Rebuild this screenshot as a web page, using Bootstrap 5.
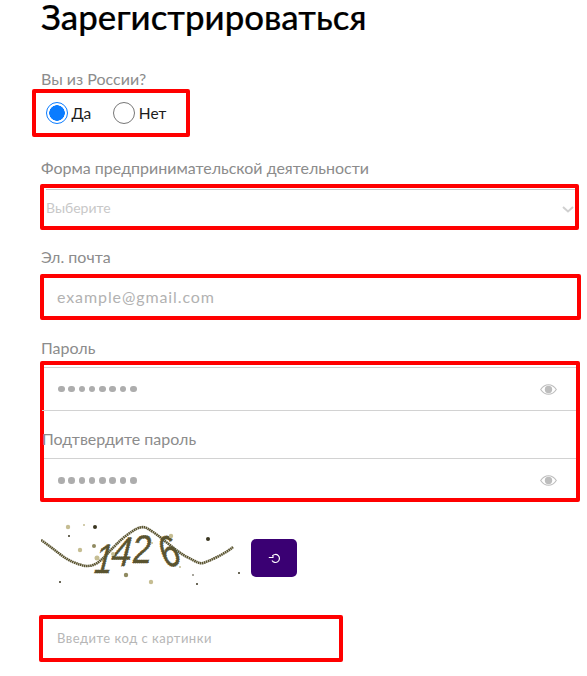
<!doctype html>
<html lang="ru">
<head>
<meta charset="utf-8">
<title>Зарегистрироваться</title>
<link href="https://cdn.jsdelivr.net/npm/bootstrap@5.3.0/dist/css/bootstrap.min.css" rel="stylesheet">
<style>
body{font-family:"Lato","Noto Sans",sans-serif;background:#fff;color:#000;overflow:hidden;}
.page{padding:1.5px 6px 0 41px;width:587px;height:676px;overflow:hidden;}
.reg-title{font-size:34.800px;line-height:30px;font-weight:500;margin:0 0 37.5px;color:#000;-webkit-text-stroke:.2px #000;}
.fld-label{display:block;font-size:16px;line-height:20px;color:#8c8c8c;margin:0;}
.red-box{border:4px solid #f00;border-radius:2px;margin-left:-1px;}
.radio-box{width:158px;height:48px;margin-left:-9px;padding:0 10px;}
.radio-opt{font-size:15.500px;line-height:20px;color:#1c1c1c;margin-left:3.500px;}
.radio-mark{width:22px;height:22px;border-radius:50%;border:1px solid #777;background:#fff;flex:none;}
.radio-on{border:1.5px solid #0a7cff;background:radial-gradient(circle,#0a7cff 0 7.5px,#fff 8px);}
.gap-no{margin-left:22px;}
.lbl-form{margin-top:21px;margin-bottom:6px;}
.sel-box{height:46px;width:539px;margin-bottom:17px;padding:1px 0 0 2px;}
.sel-inner{border-top:1px solid #ccc;height:100%;font-size:14px;color:#c8c8c8;padding:0 1px 2px 0;}
.sel-arrow{margin-top:5px;}
.line-inp{height:46px;width:541px;padding:0 13px;font-size:16px;letter-spacing:.9px;color:#b2b2b2;margin-top:7px;margin-bottom:18px;}
.sec-wrap{width:540px;height:141px;margin-top:3px;padding-top:2px;}
.pw-row{border-top:1px solid #d2d2d2;height:43px;padding:0 19px 0 14px;}
.pw-row2{border-top:1px solid #d2d2d2;height:40px;padding:4px 19px 0 14px;}
.pw-label{height:48px;padding:18px 0 0 0;margin-left:-2px;font-size:16px;line-height:20px;color:#8c8c8c;border-top:1px solid #d2d2d2;}
.pw-dots{gap:3.800px;}
.pw-dot{width:6.5px;height:6.5px;border-radius:50%;background:#adadad;}
.cap-row{margin-top:20px;gap:10px;height:63px;}
.cap-img{width:200px;height:66px;flex:none;}
.cap-digit{font-family:"Liberation Sans",sans-serif;font-size:36px;fill:#5a5430;stroke:#5a5430;stroke-width:.8;stroke-dasharray:1 1;}
.cap-wave{fill:none;stroke:#5a5430;stroke-width:2.600;stroke-dasharray:1.600 .5;}
.cap-btn{width:46px;height:38px;background:#3a0073;border:0;border-radius:5px;padding:0;margin-top:17px;}
.cap-btn:hover{background:#3a0073;}
.code-box{width:304px;height:47px;margin-top:30px;margin-left:-2px;padding:0 14px;font-size:13px;letter-spacing:.5px;color:#b6b6b6;}
</style>
</head>
<body>
<div class="page">
  <h1 class="reg-title">Зарегистрироваться</h1>
  <span class="fld-label">Вы из России?</span>
  <div class="red-box radio-box d-flex align-items-center">
    <span class="radio-mark radio-on"></span><span class="radio-opt">Да</span>
    <span class="radio-mark gap-no"></span><span class="radio-opt">Нет</span>
  </div>
  <span class="fld-label lbl-form">Форма предпринимательской деятельности</span>
  <div class="red-box sel-box">
    <div class="sel-inner d-flex align-items-center justify-content-between">
      <span>Выберите</span>
      <svg class="sel-arrow" width="12" height="7" viewBox="0 0 12 7" aria-hidden="true"><path d="M1 1l5 4.500L11 1" fill="none" stroke="#d0d0d0" stroke-width="2"/></svg>
    </div>
  </div>
  <span class="fld-label">Эл. почта</span>
  <div class="red-box line-inp d-flex align-items-center">example@gmail.com</div>
  <span class="fld-label">Пароль</span>
  <div class="red-box sec-wrap">
    <div class="pw-row d-flex align-items-center justify-content-between">
      <span class="pw-dots d-flex"><i class="pw-dot"></i><i class="pw-dot"></i><i class="pw-dot"></i><i class="pw-dot"></i><i class="pw-dot"></i><i class="pw-dot"></i><i class="pw-dot"></i><i class="pw-dot"></i></span>
      <svg width="17" height="11" viewBox="0 0 17 11" aria-hidden="true"><path d="M.7 5.500C3 2 5.500.7 8.500.7S14 2 16.300 5.500C14 9 11.500 10.300 8.500 10.300S3 9 .7 5.500z" fill="none" stroke="#bdbdbd" stroke-width="1.100"/><circle cx="8.500" cy="5.500" r="3.700" fill="#bdbdbd"/></svg>
    </div>
    <div class="pw-label">Подтвердите пароль</div>
    <div class="pw-row2 d-flex align-items-center justify-content-between">
      <span class="pw-dots d-flex"><i class="pw-dot"></i><i class="pw-dot"></i><i class="pw-dot"></i><i class="pw-dot"></i><i class="pw-dot"></i><i class="pw-dot"></i><i class="pw-dot"></i><i class="pw-dot"></i></span>
      <svg width="17" height="11" viewBox="0 0 17 11" aria-hidden="true"><path d="M.7 5.500C3 2 5.500.7 8.500.7S14 2 16.300 5.500C14 9 11.500 10.300 8.500 10.300S3 9 .7 5.500z" fill="none" stroke="#bdbdbd" stroke-width="1.100"/><circle cx="8.500" cy="5.500" r="3.700" fill="#bdbdbd"/></svg>
    </div>
  </div>
  <div class="cap-row d-flex align-items-start">
    <svg class="cap-img" viewBox="0 0 200 66" aria-label="captcha">
      <path class="cap-wave" d="M0 18C12 26 22 36 32 40S46 45 52 43C62 40 70 25 86 13S104 5 112 10S136 30 146 35S158 42 162 41S184 32 192 25"/>
      <text class="cap-digit" transform="translate(51 51) skewX(-14) scale(.9 1.150)">1</text>
      <text class="cap-digit" transform="translate(68 44) skewX(-14) scale(1 1.150)">4</text>
      <text class="cap-digit" transform="translate(90 41) skewX(-8) scale(.95 1.100)">2</text>
      <text class="cap-digit" transform="translate(125 47) rotate(-20) scale(.9 1.250)">6</text>
      <g fill="#c5bd92"><circle cx="27" cy="5" r="2.200"/><circle cx="43" cy="3" r="1"/><circle cx="39" cy="28" r="2.200"/><circle cx="56" cy="36" r="2.500"/><circle cx="72" cy="32" r="2"/><circle cx="110" cy="60" r="2.200"/><circle cx="130" cy="14" r="2.200"/><circle cx="111" cy="21" r="1"/><circle cx="139" cy="45" r="1"/></g>
      <g fill="#8f8a60"><circle cx="53" cy="24" r="2"/><circle cx="85" cy="53" r="2.200"/></g>
      <g fill="#3a3620"><circle cx="54" cy="5" r="2"/><circle cx="167" cy="17" r="2"/><circle cx="28" cy="14" r="1"/><circle cx="19" cy="60" r="1"/><circle cx="152" cy="53" r=".8"/><circle cx="156" cy="62" r="1"/><circle cx="198" cy="51" r="1"/></g>
    </svg>
    <button type="button" class="btn cap-btn d-flex align-items-center justify-content-center" aria-label="Обновить">
      <svg width="13" height="11" viewBox="0 0 13 11" aria-hidden="true"><path d="M4.300 3A4 4 0 1 1 4 7.500" fill="none" stroke="#fff" stroke-width="1.200"/><path d="M.8 4.500H5V2.500" fill="none" stroke="#fff" stroke-width="1.100"/></svg>
    </button>
  </div>
  <div class="red-box code-box d-flex align-items-center">Введите код с картинки</div>
</div>
<script src="https://cdn.jsdelivr.net/npm/bootstrap@5.3.0/dist/js/bootstrap.bundle.min.js"></script>
</body>
</html>
